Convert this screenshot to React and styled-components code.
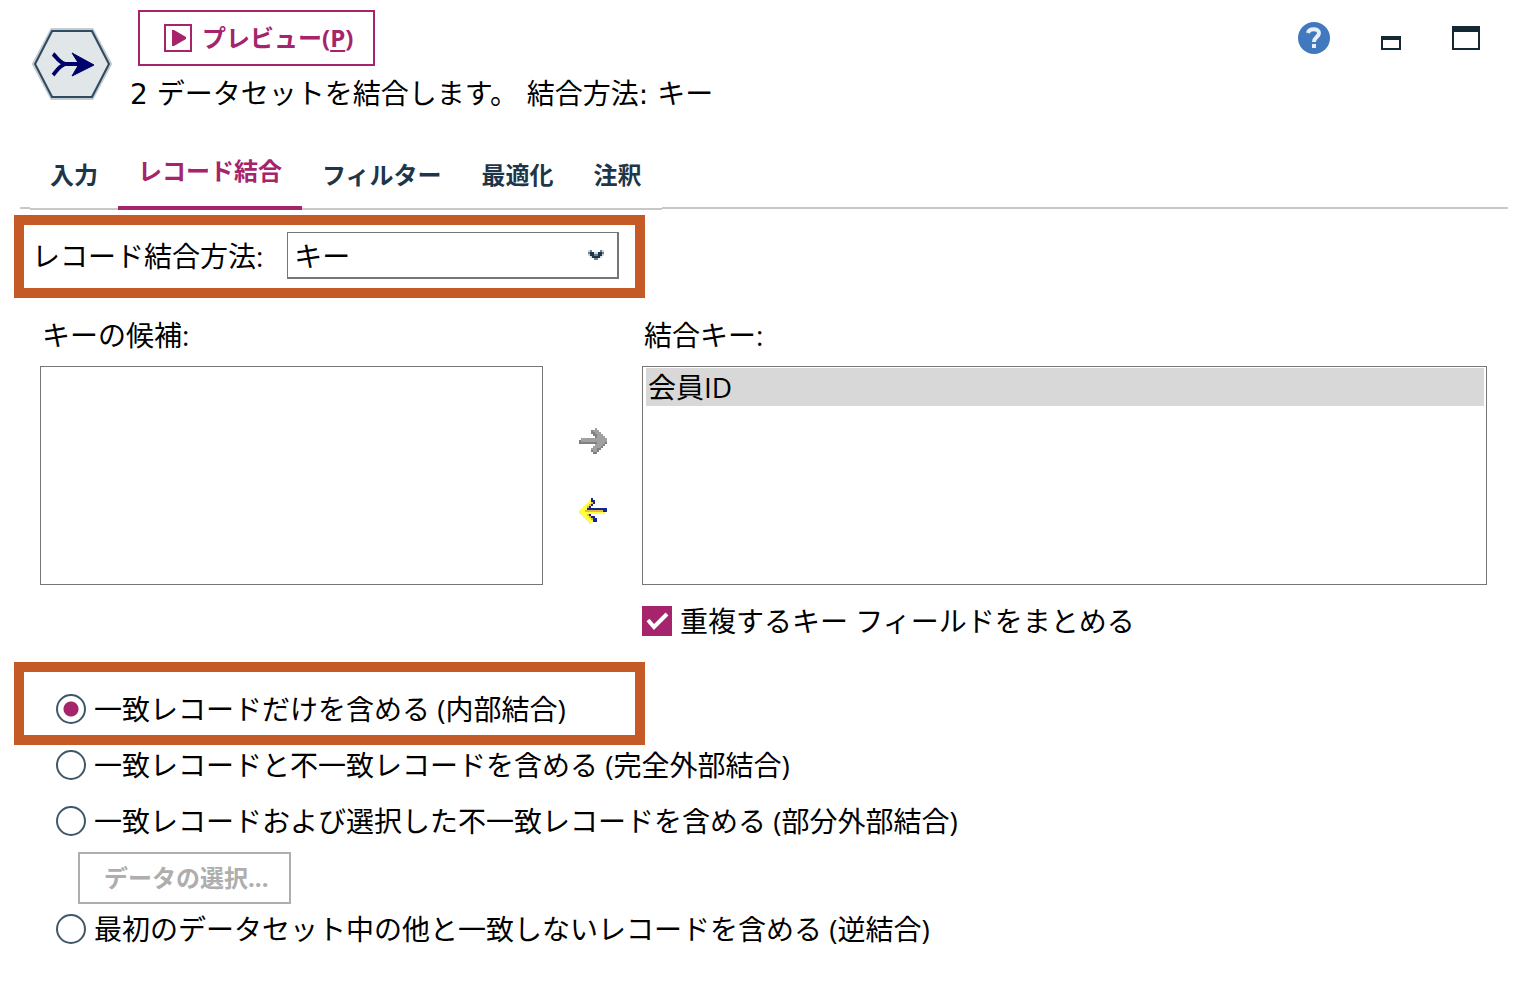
import React, { useState } from 'react'
import styled, { createGlobalStyle } from 'styled-components'

const METHODS = ['キー', '順序', '条件', 'ランク付け条件']

const TABS = ['入力', 'レコード結合', 'フィルター', '最適化', '注釈']

export default function App() {
    const [tab, setTab] = useState('レコード結合')
    const [method, setMethod] = useState('キー')
    const [merge, setMerge] = useState(true)
    const [join, setJoin] = useState('inner')

    const radio = (value, text) => (
        <Choice>
            <Radio type="radio" name="join" value={value} checked={join === value} onChange={() => setJoin(value)} />
            {text}
        </Choice>
    )

    return (
        <Dialog>
            <GlobalStyle />
            <Header>
                <NodeIcon />
                <Headtext>
                    <PreviewButton type="button">
                        <PlayIcon />
                        <span>プレビュー(<u>P</u>)</span>
                    </PreviewButton>
                    <Summary>2 データセットを結合します。 結合方法: キー</Summary>
                </Headtext>
                <Windowbuttons>
                    <IconButton type="button" aria-label="ヘルプ"><HelpIcon /></IconButton>
                    <IconButton type="button" aria-label="最小化"><MinimizeIcon /></IconButton>
                    <IconButton type="button" aria-label="最大化"><MaximizeIcon /></IconButton>
                </Windowbuttons>
            </Header>
            <Tabbar role="tablist">
                {TABS.map((name) => (
                    <Tab key={name} type="button" role="tab" aria-selected={tab === name} $active={tab === name} onClick={() => setTab(name)}>
                        {name}
                    </Tab>
                ))}
            </Tabbar>
            <Highlight>
                <Methodrow>
                    <label htmlFor="method">レコード結合方法:</label>
                    <Selectwrap>
                        <Select id="method" value={method} onChange={(e) => setMethod(e.target.value)}>
                            {METHODS.map((m) => <option key={m}>{m}</option>)}
                        </Select>
                        <Chevron><ChevronIcon /></Chevron>
                    </Selectwrap>
                </Methodrow>
            </Highlight>
            <Keys>
                <Listlabel id="candidates">キーの候補:</Listlabel>
                <span />
                <Listlabel id="mergekeys">結合キー:</Listlabel>
                <Listbox role="listbox" aria-labelledby="candidates" />
                <Arrows>
                    <IconButton type="button" aria-label="追加" disabled><AddIcon /></IconButton>
                    <IconButton type="button" aria-label="削除"><RemoveIcon /></IconButton>
                </Arrows>
                <Listbox role="listbox" aria-labelledby="mergekeys">
                    <Listitem role="option" aria-selected="true">会員ID</Listitem>
                </Listbox>
                <Mergeoption>
                    <Checkwrap>
                        <Checkbox type="checkbox" checked={merge} onChange={(e) => setMerge(e.target.checked)} />
                        {merge && <CheckIcon />}
                    </Checkwrap>
                    重複するキー フィールドをまとめる
                </Mergeoption>
            </Keys>
            <Highlight>
                <Firstchoice>{radio('inner', '一致レコードだけを含める (内部結合)')}</Firstchoice>
            </Highlight>
            <Choices>
                {radio('full', '一致レコードと不一致レコードを含める (完全外部結合)')}
                {radio('partial', '一致レコードおよび選択した不一致レコードを含める (部分外部結合)')}
            </Choices>
            <DataButton type="button" disabled={join !== 'partial'}>データの選択...</DataButton>
            <Choices>
                {radio('anti', '最初のデータセット中の他と一致しないレコードを含める (逆結合)')}
            </Choices>
        </Dialog>
    )
}

// draws rows of characters as square pixels, one colour per character
function Pixels({ rows, colors, size }) {
    return (
        <svg width={rows[0].length * size} height={rows.length * size} viewBox={`0 0 ${rows[0].length} ${rows.length}`} shapeRendering="crispEdges" aria-hidden="true">
            {rows.map((row, y) => [...row].map((c, x) => (
                colors[c] && <rect key={`${x}-${y}`} x={x} y={y} width="1" height="1" fill={colors[c]} />
            )))}
        </svg>
    )
}

function AddIcon() {
    return (
        <Pixels
            size={2}
            colors={{ g: '#a0a0a0', d: '#808080' }}
            rows={[
                '........g.....',
                '......dggg....',
                '......ddggg...',
                '.......ddggg..',
                '........dgggg.',
                '.ggggggggggggg',
                'dggggggggggggg',
                'dddddddddggggd',
                '........ggggd.',
                '.......ggggd..',
                '......gggdd...',
                '......dggd....',
                '.......dd.....',
            ]}
        />
    )
}

function RemoveIcon() {
    return (
        <Pixels
            size={2}
            colors={{ y: '#ffff40', o: '#e8b840', b: '#102890' }}
            rows={[
                '......b.......',
                '.....ybb......',
                '....yyob......',
                '...yyob.......',
                '..yyob........',
                '.yyybbbbbbbbbb',
                'yyyooooooooobb',
                'yyyyyyyyyyyyy.',
                '.yyyob........',
                '..yyyobb......',
                '...yyyobb.....',
                '....yyybb.....',
                '.....y........',
            ]}
        />
    )
}

function NodeIcon() {
    return (
        <svg width="80" height="72" viewBox="0 0 80 72" aria-hidden="true">
            <path d="M20 2H60L78 36L60 70H20L2 36Z" fill="#e1e6e9" stroke="#c3ccd2" strokeWidth="4" />
            <path d="M20 3H60L77 36L60 69H20L3 36Z" fill="none" stroke="#2f4a5c" strokeWidth="2" />
            <path d="M21 26C24 28 26 34 33 36C26 39 24 44 21 47M32 36H50" fill="none" stroke="#00006a" strokeWidth="4" />
            <path d="M40 25L62 37L40 48L47 36Z" fill="#00006a" stroke="#00006a" strokeWidth="1" />
        </svg>
    )
}

function PlayIcon() {
    return (
        <svg width="28" height="28" viewBox="0 0 28 28" aria-hidden="true">
            <rect x="1" y="1" width="26" height="26" fill="none" stroke="#a5246b" strokeWidth="2" />
            <path d="M8 6H10L22 13V15L10 22H8Z" fill="#a5246b" />
        </svg>
    )
}

function HelpIcon() {
    return (
        <svg width="32" height="32" viewBox="0 0 32 32" aria-hidden="true">
            <circle cx="16" cy="16" r="16" fill="#4178be" />
            <path d="M10 11C11 6 21 6 21 11C21 15 16 15 16 20" fill="none" stroke="#e8eff8" strokeWidth="4" />
            <rect x="14" y="22" width="4" height="4" fill="#e8eff8" />
        </svg>
    )
}

function MinimizeIcon() {
    return (
        <svg width="20" height="32" viewBox="0 0 20 32" aria-hidden="true">
            <path d="M0 14H20V28H0ZM2 18V26H18V18Z" fill="#152935" fillRule="evenodd" />
        </svg>
    )
}

function MaximizeIcon() {
    return (
        <svg width="28" height="32" viewBox="0 0 28 32" aria-hidden="true">
            <path d="M0 4H28V28H0ZM2 10V26H26V10Z" fill="#152935" fillRule="evenodd" />
        </svg>
    )
}

function ChevronIcon() {
    return (
        <Pixels
            size={2}
            colors={{ d: '#1d3649', m: '#6f8190', l: '#d3dade' }}
            rows={[
                'lm....ml',
                'mddllddm',
                'lddmmddl',
                '.lddddl.',
                '...mm...',
            ]}
        />
    )
}

function CheckIcon() {
    return (
        <Check viewBox="0 0 30 30" aria-hidden="true">
            <path d="M6 14L12 21L25 8" fill="none" stroke="#fff" strokeWidth="4" />
        </Check>
    )
}

const GlobalStyle = createGlobalStyle`
    * {
        box-sizing: border-box;
    }
    body {
        margin: 0;
        background: #fff;
    }
    body, button, select {
        font-family: "Open Sans", "Noto Sans CJK JP", sans-serif;
    }
`;
const Dialog = styled.main`
    color: #000;
    font-size: 28px;
    line-height: 40px;
    padding: 10px 0 24px;
`;
const Header = styled.header`
    display: flex;
    align-items: flex-start;
    padding: 0 56px 0 32px;

    > svg {
        margin-top: 18px;
    }
`;
const Headtext = styled.div`
    flex: 1;
    padding-left: 18px;
`;
const Button = styled.button`
    display: flex;
    align-items: center;
    gap: 10px;
    background: #fff;
    border: 2px solid;
    font-size: 24px;
    font-weight: bold;
    line-height: 32px;
    padding: 0 20px 0 24px;
`;
const PreviewButton = styled(Button)`
    color: #a5246b;
    border-color: #a5246b;
    height: 56px;
    margin-left: 8px;

    u {
        text-underline-offset: 3px;
    }
`;
const DataButton = styled(Button)`
    color: #a5246b;
    height: 52px;
    margin: 11px 0 5px 78px;

    &:disabled {
        color: #aeaeae;
    }
`;
const Summary = styled.p`
    font-family: "DejaVu Sans", "Noto Sans CJK JP", sans-serif;
    margin: 9px 0 0;
`;
const Windowbuttons = styled.div`
    display: flex;
    gap: 51px;
    padding-top: 12px;
`;
const IconButton = styled.button`
    display: flex;
    padding: 0;
    border: 0;
    background: none;
`;
const Tabbar = styled.div`
    display: flex;
    align-items: flex-end;
    height: 94px;
    margin: 0 28px 0 20px;
    padding-left: 10px;
    border-bottom: 2px solid #c8c8c8;
`;
const Tab = styled.button`
    background: #fff;
    border: 0;
    border-bottom: ${(p) => (p.$active ? '4px solid #a5246b' : '2px solid #c8c8c8')};
    color: ${(p) => (p.$active ? '#a5246b' : '#1d3649')};
    font-size: 24px;
    font-weight: bold;
    line-height: 24px;
    margin-bottom: -3px;
    padding: 0 20px ${(p) => (p.$active ? '23px' : '21px')};
`;
// thick frame drawn round the settings that matter
const Highlight = styled.section`
    width: fit-content;
    min-width: 631px;
    margin-left: 14px;
    border: 10px solid #c65a26;

    ${Tabbar} + & {
        margin-top: 6px;
    }
`;
const Methodrow = styled.div`
    display: flex;
    align-items: center;
    gap: 24px;
    padding: 7px 16px 9px 8px;
`;
const Selectwrap = styled.div`
    position: relative;
    flex: 1;
`;
const Select = styled.select`
    appearance: none;
    display: block;
    width: 100%;
    min-width: 331px;
    height: 47px;
    border: 1px solid #767676;
    border-width: 1px 2px 2px 1px;
    border-radius: 0;
    background: #fff;
    color: #000;
    font-size: 28px;
    padding: 2px 40px 0 6px;
`;
const Chevron = styled.span`
    position: absolute;
    right: 15px;
    top: 18px;
    display: flex;
    pointer-events: none;
`;
const Keys = styled.section`
    display: grid;
    grid-template-columns: 503fr 99px 845fr;
    padding: 17px 49px 0 40px;
`;
const Listlabel = styled.div`
    padding: 0 0 11px 2px;
`;
const Listbox = styled.ul`
    list-style: none;
    height: 219px;
    margin: 0;
    padding: 1px 2px 1px 3px;
    border: 1px solid #767676;
    overflow: auto;
`;
const Listitem = styled.li`
    background: #d8d8d8;
    line-height: 38px;
    padding-left: 2px;
`;
const Arrows = styled.div`
    display: flex;
    flex-direction: column;
    align-items: center;
    justify-content: center;
    gap: 44px;
`;
const Mergeoption = styled.label`
    grid-column: 3;
    display: flex;
    align-items: center;
    gap: 8px;
    padding: 16px 0 21px;
`;
const Checkwrap = styled.span`
    position: relative;
    display: flex;
`;
const Checkbox = styled.input`
    appearance: none;
    width: 30px;
    height: 30px;
    margin: 0;
    border: 2px solid #a5246b;
    background: #fff;

    &:checked {
        background: #a5246b;
    }
`;
const Check = styled.svg`
    position: absolute;
    inset: 0;
    pointer-events: none;
`;
const Firstchoice = styled.div`
    padding: 17px 32px 6px;
`;
const Choices = styled.div`
    display: flex;
    flex-direction: column;
    gap: 16px;
    padding-left: 56px;
`;
const Choice = styled.label`
    display: flex;
    align-items: center;
    gap: 8px;
`;
const Radio = styled.input`
    appearance: none;
    width: 30px;
    height: 30px;
    margin: 0;
    border: 2px solid #3f5768;
    border-radius: 50%;
    background: #fff;

    &:checked {
        background: radial-gradient(circle, #a5246b 7px, #fff 8px);
    }
`;
